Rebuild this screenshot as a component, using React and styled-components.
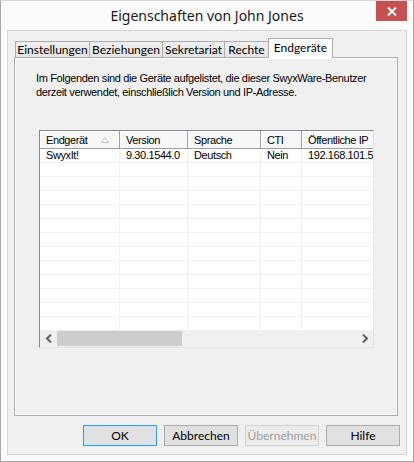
import React from 'react'
import styled, { createGlobalStyle } from 'styled-components'

const GlobalStyle = createGlobalStyle`
  html, body {
    margin: 0;
    padding: 0;
    background: #ffffff;
  }
  * {
    box-sizing: border-box;
  }
`

const tabs = [
  { label: 'Einstellungen', width: 75 },
  { label: 'Beziehungen', width: 74 },
  { label: 'Sekretariat', width: 63 },
  { label: 'Rechte', width: 45 },
  { label: 'Endgeräte', width: 65, active: true },
]

const columns = [
  { label: 'Endgerät', width: 80, sort: true },
  { label: 'Version', width: 68 },
  { label: 'Sprache', width: 73 },
  { label: 'CTI', width: 41 },
  { label: 'Öffentliche IP', width: 120 },
]

const rows = [['SwyxIt!', '9.30.1544.0', 'Deutsch', 'Nein', '192.168.101.50']]
const EMPTY_ROWS = 12

const buttons = [
  { label: 'OK', primary: true },
  { label: 'Abbrechen' },
  { label: 'Übernehmen', disabled: true },
  { label: 'Hilfe' },
]

const App = () => {
  return (
    <Window>
      <GlobalStyle />
      <TitleBar>
        <span />
        <Title>Eigenschaften von John Jones</Title>
        <CloseButton aria-label='Schließen'>
          <svg width='10' height='9' viewBox='0 0 10 9'>
            <path d='M1 0.5 L9 8.5 M9 0.5 L1 8.5' stroke='#fff' strokeWidth='2' />
          </svg>
        </CloseButton>
      </TitleBar>

      <Client>
        <TabRow>
          {tabs.map((t) => (
            <Tab key={t.label} $w={t.width} $active={t.active}>
              {t.label}
            </Tab>
          ))}
        </TabRow>

        <Panel>
          <Intro>
            Im Folgenden sind die Geräte aufgelistet, die dieser SwyxWare-Benutzer
            <br />
            derzeit verwendet, einschließlich Version und IP-Adresse.
          </Intro>

          <ListView>
            <HeaderRow>
              {columns.map((c) => (
                <HeaderCell key={c.label} $w={c.width}>
                  {c.label}
                  {c.sort && (
                    <SortMark width='8' height='6' viewBox='0 0 8 6'>
                      <path d='M4 0.5 L7.5 5.5 L0.5 5.5 Z' fill='none' stroke='#c2c2c2' />
                    </SortMark>
                  )}
                </HeaderCell>
              ))}
            </HeaderRow>

            <Body>
              {rows.map((r, i) => (
                <Row key={i}>
                  {r.map((v, j) => (
                    <Cell key={j} $w={columns[j].width}>
                      {v}
                    </Cell>
                  ))}
                </Row>
              ))}
              {Array.from({ length: EMPTY_ROWS }).map((_, i) => (
                <Row key={'e' + i}>
                  {columns.map((c) => (
                    <Cell key={c.label} $w={c.width} />
                  ))}
                </Row>
              ))}
            </Body>

            <ScrollBar>
              <ScrollArrow>
                <svg width='8' height='9' viewBox='0 0 8 9'>
                  <path d='M6 0.5 L2 4.5 L6 8.5' fill='none' stroke='#606060' strokeWidth='2' />
                </svg>
              </ScrollArrow>
              <Track>
                <Thumb />
              </Track>
              <ScrollArrow>
                <svg width='8' height='9' viewBox='0 0 8 9'>
                  <path d='M2 0.5 L6 4.5 L2 8.5' fill='none' stroke='#606060' strokeWidth='2' />
                </svg>
              </ScrollArrow>
            </ScrollBar>
          </ListView>
        </Panel>

        <ButtonRow>
          {buttons.map((b) => (
            <Button key={b.label} $primary={b.primary} disabled={b.disabled}>
              {b.label}
            </Button>
          ))}
        </ButtonRow>
      </Client>
    </Window>
  )
}

const Window = styled.div`
  width: 414px;
  height: 462px;
  display: flex;
  flex-direction: column;
  background: #fbfbfb;
  border: 1px solid #a8a8a8;
  border-top-color: #d8d8d8;
`

const TitleBar = styled.div`
  height: 29px;
  display: grid;
  grid-template-columns: 1fr auto 1fr;
  align-items: start;
`

const Title = styled.div`
  font-family: 'Noto Sans', 'Open Sans', sans-serif;
  font-size: 14px;
  color: #1a1a1a;
  line-height: 20px;
  padding-top: 5px;
`

const CloseButton = styled.div`
  justify-self: end;
  margin-right: 6px;
  width: 31px;
  height: 20px;
  background: #c75050;
  display: flex;
  align-items: center;
  justify-content: center;
`

const Client = styled.div`
  flex: 1;
  margin: 0 6px 6px;
  background: #f0f0f0;
  border: 1px solid #d6d6d6;
  display: flex;
  flex-direction: column;
  padding: 0 8px 8px 6px;
`

const TabRow = styled.div`
  height: 27px;
  display: flex;
  align-items: flex-end;
  padding-left: 2px;
  margin-bottom: -1px;
  position: relative;
  z-index: 1;
`

const Tab = styled.div`
  width: ${(p) => p.$w}px;
  height: ${(p) => (p.$active ? 20 : 17)}px;
  border: 1px solid #acacac;
  border-bottom: ${(p) => (p.$active ? 'none' : '1px solid #acacac')};
  margin-left: -1px;
  background: ${(p) => (p.$active ? '#ffffff' : 'linear-gradient(#f0f0f0, #e5e5e5)')};
  font-family: Lato, 'Noto Sans', sans-serif;
  font-size: 12px;
  color: #000;
  display: flex;
  align-items: ${(p) => (p.$active ? 'flex-start' : 'center')};
  justify-content: center;
  line-height: 15px;
  padding-top: ${(p) => (p.$active ? 1 : 0)}px;
  white-space: nowrap;
`

const Panel = styled.div`
  height: 359px;
  background: #f0f0f0;
  border: 1px solid #adadad;
  box-shadow: inset 0 0 0 1px #ffffff;
  padding: 13px 0 0 24px;
  display: flex;
  flex-direction: column;
`

const Intro = styled.p`
  margin: 0 0 0 -3px;
  font-family: 'Liberation Sans', Arial, sans-serif;
  font-size: 11px;
  line-height: 14px;
  letter-spacing: -0.35px;
  color: #000;
  white-space: nowrap;
`

const ListView = styled.div`
  margin-top: 31px;
  width: 335px;
  height: 218px;
  background: #ffffff;
  border-top: 1px solid #828790;
  border-left: 1px solid #828790;
  border-right: 1px solid #e3e3e3;
  border-bottom: 1px solid #e3e3e3;
  display: flex;
  flex-direction: column;
  overflow: hidden;
  font-family: 'Liberation Sans', Arial, sans-serif;
  font-size: 11px;
  letter-spacing: -0.4px;
  color: #000;
`

const HeaderRow = styled.div`
  display: flex;
  height: 18px;
  flex-shrink: 0;
`

const HeaderCell = styled.div`
  width: ${(p) => p.$w}px;
  flex-shrink: 0;
  height: 18px;
  background: #f7f7f7;
  border-right: 1px solid #a0a0a0;
  border-bottom: 1px solid #a0a0a0;
  box-shadow: inset 1px 1px 0 #ffffff;
  padding: 0 6px;
  display: flex;
  align-items: center;
  gap: 14px;
  white-space: nowrap;
  overflow: hidden;
`

const SortMark = styled.svg`
  flex-shrink: 0;
`

const Body = styled.div`
  flex: 1;
  overflow: hidden;
`

const Row = styled.div`
  display: flex;
  height: 14px;
  border-bottom: 1px solid #f0f0f0;
`

const Cell = styled.div`
  width: ${(p) => p.$w}px;
  flex-shrink: 0;
  border-right: 1px solid #f0f0f0;
  padding: 0 6px;
  line-height: 13px;
  white-space: nowrap;
  overflow: hidden;
`

const ScrollBar = styled.div`
  height: 17px;
  flex-shrink: 0;
  display: flex;
  background: #f0f0f0;
`

const ScrollArrow = styled.div`
  width: 17px;
  display: flex;
  align-items: center;
  justify-content: center;
`

const Track = styled.div`
  flex: 1;
  display: flex;
  padding: 1px 0;
`

const Thumb = styled.div`
  width: 125px;
  background: #cdcdcd;
`

const ButtonRow = styled.div`
  display: flex;
  justify-content: flex-end;
  gap: 7px;
  margin: 9px -2px 0 0;
`

const Button = styled.button`
  width: 74px;
  height: 21px;
  padding: 0;
  font-family: Lato, 'Noto Sans', sans-serif;
  font-size: 12px;
  color: #000;
  background: #e1e1e1;
  border: 1px solid ${(p) => (p.$primary ? '#3399ff' : '#adadad')};
  box-shadow: ${(p) => (p.$primary ? 'inset 0 0 0 1px #cce4f7' : 'none')};

  &:disabled {
    color: #a0a0a0;
    background: #ececec;
    border-color: #d2d2d2;
  }
`

export default App
